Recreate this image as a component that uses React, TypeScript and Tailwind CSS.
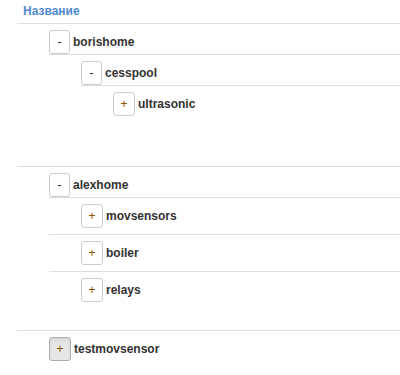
import React from "react";

type Node = { name: string; open?: boolean; active?: boolean; children?: Node[] };

const tree: Node[] = [
  {
    name: "borishome",
    open: true,
    children: [
      { name: "cesspool", open: true, children: [{ name: "ultrasonic" }] },
    ],
  },
  {
    name: "alexhome",
    open: true,
    children: [{ name: "movsensors" }, { name: "boiler" }, { name: "relays" }],
  },
  { name: "testmovsensor", active: true },
];

function Toggle({ open, active }: { open?: boolean; active?: boolean }) {
  return (
    <button
      className={
        "flex h-[24px] items-center justify-center rounded-[3px] border text-[12px] leading-none " +
        (open ? "w-[21px] " : "w-[22px] ") +
        (active
          ? "border-[#adadad] bg-[#e6e6e6] shadow-[inset_0_2px_3px_rgba(0,0,0,0.08)] "
          : "border-[#cccccc] bg-white ") +
        (open ? "text-[#222222]" : "text-[#8a4c00]")
      }
    >
      {open ? "-" : "+"}
    </button>
  );
}

function Row({ node }: { node: Node }) {
  return (
    <div className="border-t border-[#dddddd] pl-[32px] pt-[6px] pb-[6px]">
      <div className="flex h-[24px] items-center gap-[3px]">
        <Toggle open={node.open} active={node.active} />
        <span className="text-[12px] font-bold text-[#333333]">{node.name}</span>
      </div>
      {node.open && node.children && (
        <div className="mb-[16px]">
          {node.children.map((c) => (
            <Row key={c.name} node={c} />
          ))}
        </div>
      )}
    </div>
  );
}

export default function App() {
  return (
    <div
      className="w-[400px] bg-white pl-[17px]"
      style={{ fontFamily: '"Liberation Sans", Arial, sans-serif' }}
    >
      <div className="h-[23px] pl-[6px] pt-[2px] text-[12px] font-bold text-[#4f8ad1]">
        Название
      </div>
      {tree.map((n) => (
        <Row key={n.name} node={n} />
      ))}
    </div>
  );
}
